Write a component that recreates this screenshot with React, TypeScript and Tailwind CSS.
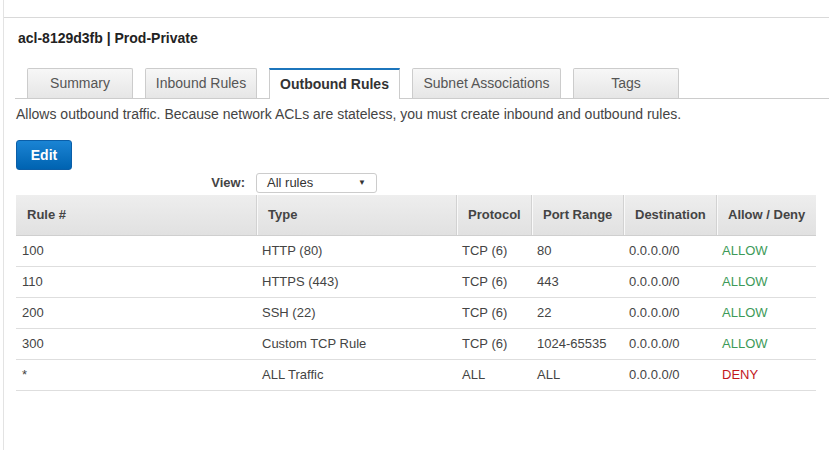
type Rule = {
  num: string;
  type: string;
  protocol: string;
  port: string;
  dest: string;
  action: 'ALLOW' | 'DENY';
};

const RULES: Rule[] = [
  { num: '100', type: 'HTTP (80)', protocol: 'TCP (6)', port: '80', dest: '0.0.0.0/0', action: 'ALLOW' },
  { num: '110', type: 'HTTPS (443)', protocol: 'TCP (6)', port: '443', dest: '0.0.0.0/0', action: 'ALLOW' },
  { num: '200', type: 'SSH (22)', protocol: 'TCP (6)', port: '22', dest: '0.0.0.0/0', action: 'ALLOW' },
  { num: '300', type: 'Custom TCP Rule', protocol: 'TCP (6)', port: '1024-65535', dest: '0.0.0.0/0', action: 'ALLOW' },
  { num: '*', type: 'ALL Traffic', protocol: 'ALL', port: 'ALL', dest: '0.0.0.0/0', action: 'DENY' },
];

const TABS = [
  { label: 'Summary', w: 'w-[106px]' },
  { label: 'Inbound Rules', w: 'w-[112px]' },
  { label: 'Outbound Rules', w: 'w-[131px]', active: true },
  { label: 'Subnet Associations', w: 'w-[149px]' },
  { label: 'Tags', w: 'w-[106px]' },
];

const COLS = [
  { label: 'Rule #', w: 'w-[240px]' },
  { label: 'Type', w: 'w-[200px]' },
  { label: 'Protocol', w: 'w-[75px]' },
  { label: 'Port Range', w: 'w-[92px]' },
  { label: 'Destination', w: 'w-[93px]' },
  { label: 'Allow / Deny', w: 'w-[100px]' },
];

export default function App() {
  return (
    <div className="w-[829px] h-[450px] bg-white pl-[3px] overflow-hidden font-['Liberation_Sans',Arial,sans-serif] text-[#444]">
      <div className="h-full border-l border-[#e3e3e3]">
        <div className="h-[18px] border-b border-[#d9d9d9]" />

        <div className="pl-[14px] h-[50px] flex items-center pb-[9px]">
          <h1 className="text-[14px] font-bold text-[#222]">acl-8129d3fb | Prod-Private</h1>
        </div>

        {/* tab strip */}
        <div className="ml-[11px] h-[31px] flex items-end gap-[12px] pl-[12px] border-b border-[#ccc]">
          {TABS.map((t) =>
            t.active ? (
              <div
                key={t.label}
                className={`${t.w} h-[31px] -mb-px flex items-center justify-center bg-white border border-b-0 border-[#ccc] border-t-2 border-t-[#1c75bc] text-[14px] font-bold text-[#333]`}
              >
                {t.label}
              </div>
            ) : (
              <div
                key={t.label}
                className={`${t.w} h-[30px] flex items-center justify-center bg-gradient-to-b from-[#f7f7f7] to-[#e6e6e6] border border-b-0 border-[#ccc] rounded-t-[2px] text-[14px] text-[#555]`}
              >
                {t.label}
              </div>
            ),
          )}
        </div>

        <div className="pl-[12px]">
          <p className="text-[14px] text-[#444] h-[31px] flex items-center">
            Allows outbound traffic. Because network ACLs are stateless, you must create inbound and outbound rules.
          </p>

          <div className="mt-[10px] h-[31px]">
            <button className="w-[56px] h-[30px] rounded-[3px] border border-[#0a5ea8] bg-gradient-to-b from-[#1a84d4] to-[#0063b1] text-white font-bold text-[14px]">
              Edit
            </button>
          </div>

          <div className="flex items-center h-[24px]">
            <span className="w-[240px] text-right text-[13px] font-bold text-[#444] pr-[11px]">View:</span>
            <div className="w-[121px] h-[20px] border border-[#ccc] rounded-[3px] flex items-center justify-between px-[10px] text-[13px] text-[#333]">
              <span>All rules</span>
              <span className="text-[8px] text-[#333]">▼</span>
            </div>
          </div>

          {/* rules table */}
          <div className="w-[800px]">
            <div className="flex h-[41px] bg-gradient-to-b from-[#eeeeee] to-[#e1e1e1] border-b border-[#cfcfcf]">
              {COLS.map((c, i) => (
                <div
                  key={c.label}
                  className={`${c.w} flex items-center text-[13px] font-bold text-[#444] pl-[11px] ${i === 0 ? '' : 'border-l border-[#d2d2d2] shadow-[inset_1px_0_0_#f9f9f9]'}`}
                >
                  {c.label}
                </div>
              ))}
            </div>
            {RULES.map((r) => (
              <div key={r.num} className="flex h-[31px] border-b border-[#dedede] text-[13px] text-[#444] items-center">
                <div className="w-[240px] pl-[6px]">{r.num}</div>
                <div className="w-[200px] pl-[6px]">{r.type}</div>
                <div className="w-[75px] pl-[6px]">{r.protocol}</div>
                <div className="w-[92px] pl-[6px]">{r.port}</div>
                <div className="w-[93px] pl-[6px]">{r.dest}</div>
                <div className={`w-[100px] pl-[6px] ${r.action === 'ALLOW' ? 'text-[#3d9a58]' : 'text-[#c3161c]'}`}>{r.action}</div>
              </div>
            ))}
          </div>
        </div>
      </div>
    </div>
  );
}
